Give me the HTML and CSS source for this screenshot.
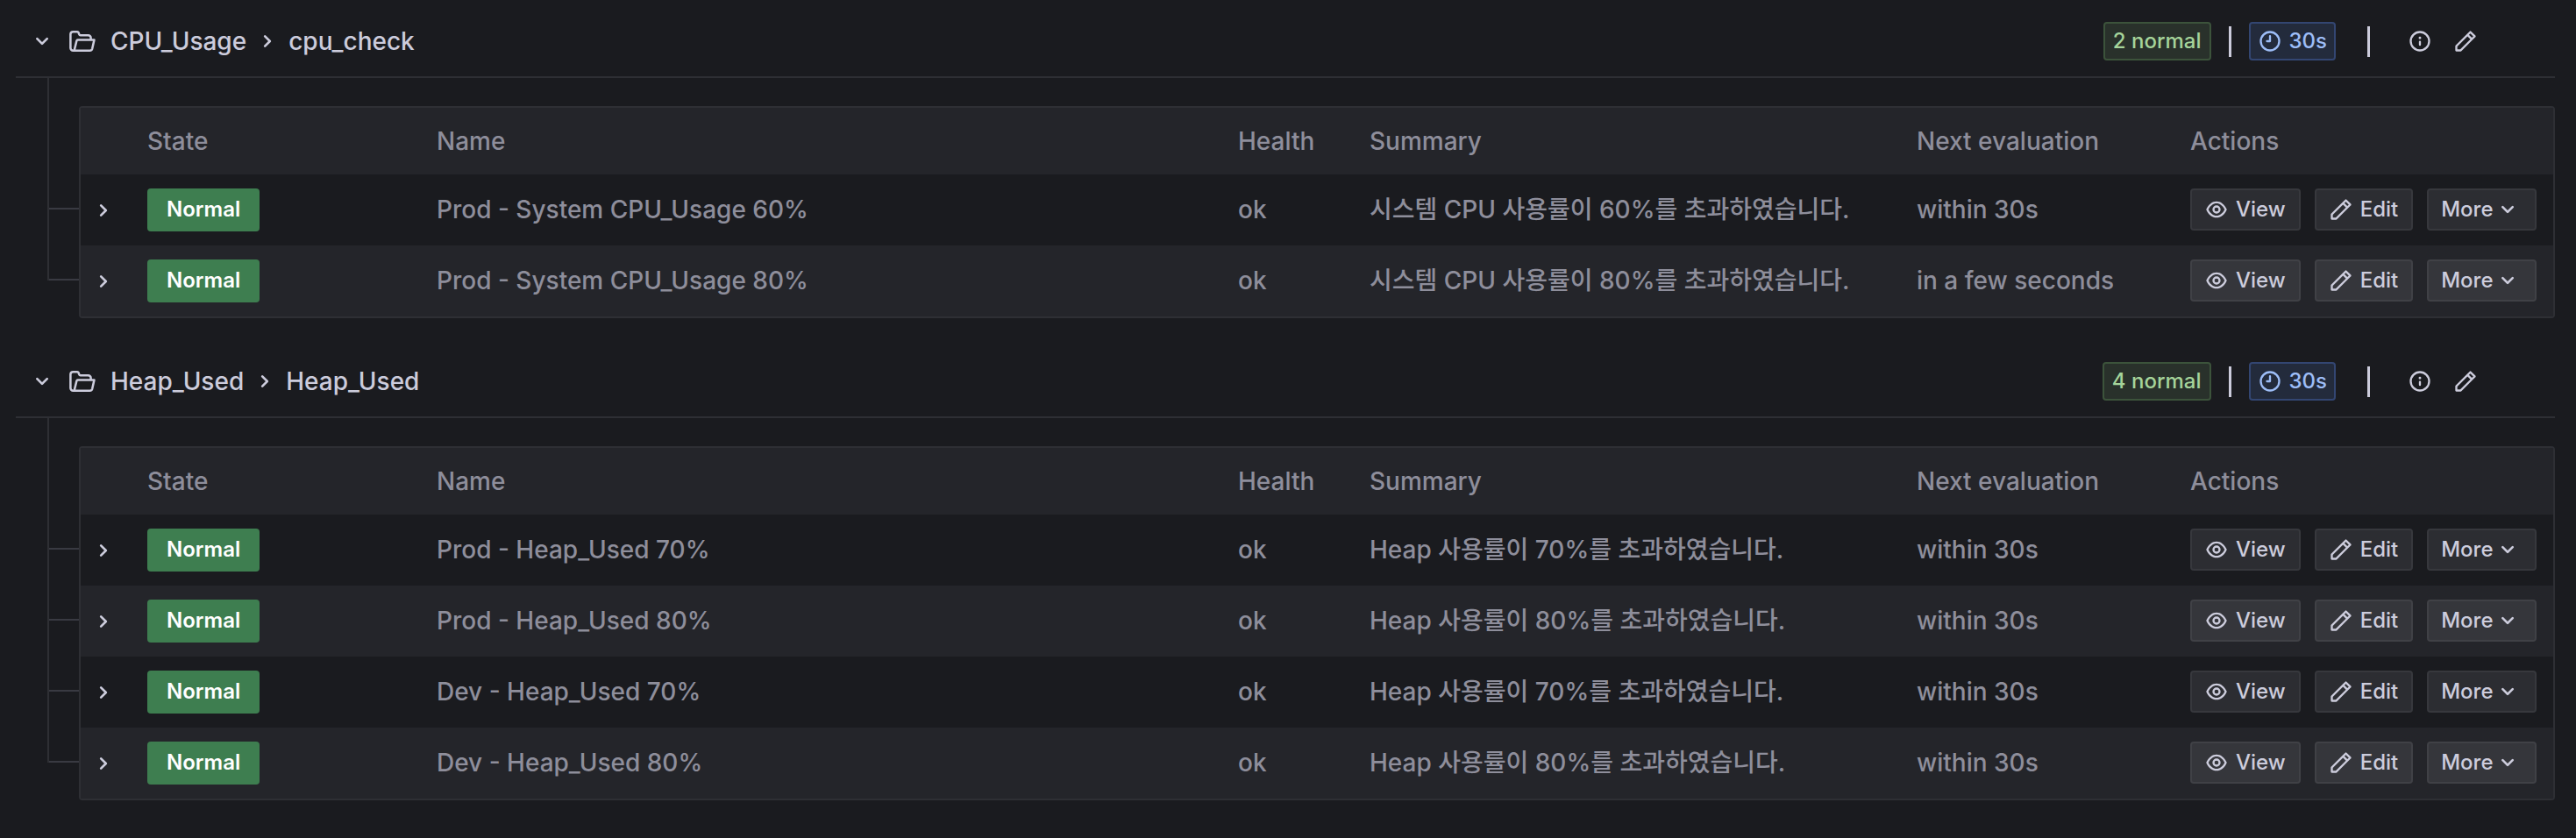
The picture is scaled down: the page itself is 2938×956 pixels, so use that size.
FILE: index.html
```html
<!DOCTYPE html>
<html lang="ko">
<head>
  <meta charset="UTF-8">
  <meta name="viewport" content="width=device-width, initial-scale=1.0">
  <title>Alert rules</title>
  <link rel="stylesheet" href="styles.css">
</head>
<body>

  <svg class="sprite" aria-hidden="true">
    <symbol id="angle-down" viewBox="0 0 24 24"><path d="M17,9.17a1,1,0,0,0-1.41,0L12,12.71,8.46,9.17a1,1,0,0,0-1.41,0,1,1,0,0,0,0,1.42l4.24,4.24a1,1,0,0,0,1.42,0L17,10.59A1,1,0,0,0,17,9.17Z"/></symbol>
    <symbol id="angle-right" viewBox="0 0 24 24"><path d="M14.83,11.29,10.59,7.05a1,1,0,0,0-1.42,0,1,1,0,0,0,0,1.41L12.71,12,9.17,15.54a1,1,0,0,0,0,1.41,1,1,0,0,0,1.42,0l4.24-4.24A1,1,0,0,0,14.83,11.29Z"/></symbol>
    <symbol id="folder" viewBox="0 0 24 24"><path fill="none" stroke="currentColor" stroke-width="1.9" stroke-linejoin="round" d="M5 20H4a2.2 2.2 0 0 1-2.2-2.2V6A2.2 2.2 0 0 1 4 3.9h3.6a1.2 1.2 0 0 1 1.1.8l.5 1.4a1.2 1.2 0 0 0 1.1.8H17a2.2 2.2 0 0 1 2.2 2.2v1.7M5 20l2-8.2a1.2 1.2 0 0 1 1.1-.9h14L20.4 18.4A2.2 2.2 0 0 1 18.3 20H5"/></symbol>
    <symbol id="info" viewBox="0 0 24 24"><path d="M12,2A10,10,0,1,0,22,12,10,10,0,0,0,12,2Zm0,18a8,8,0,1,1,8-8A8,8,0,0,1,12,20Zm0-8.5a1,1,0,0,0-1,1v3a1,1,0,0,0,2,0v-3A1,1,0,0,0,12,11.5Zm0-4a1.25,1.25,0,1,0,1.25,1.25A1.25,1.25,0,0,0,12,7.5Z"/></symbol>
    <symbol id="clock" viewBox="0 0 24 24"><path d="M12,2A10,10,0,1,0,22,12,10,10,0,0,0,12,2Zm0,18a8,8,0,1,1,8-8A8,8,0,0,1,12,20ZM12,6a1,1,0,0,0-1,1v4H9a1,1,0,0,0,0,2h3a1,1,0,0,0,1-1V7A1,1,0,0,0,12,6Z"/></symbol>
    <symbol id="pen" viewBox="0 0 24 24"><path d="M22,7.24a1,1,0,0,0-.29-.71L17.47,2.29A1,1,0,0,0,16.76,2a1,1,0,0,0-.71.29L13.22,5.12h0L2.29,16.05a1,1,0,0,0-.29.71V21a1,1,0,0,0,1,1H7.24A1,1,0,0,0,8,21.71L18.87,10.78h0L21.71,8a1.19,1.19,0,0,0,.22-.33,1,1,0,0,0,0-.24.7.7,0,0,0,0-.14ZM6.83,20H4V17.17l9.93-9.93,2.83,2.83ZM18.17,8.66,15.34,5.83l1.42-1.41,2.82,2.82Z"/></symbol>
    <symbol id="eye" viewBox="0 0 24 24"><path d="M21.92,11.6C19.9,6.91,16.1,4,12,4S4.1,6.91,2.08,11.6a1,1,0,0,0,0,.8C4.1,17.09,7.9,20,12,20s7.9-2.91,9.92-7.6A1,1,0,0,0,21.92,11.6ZM12,18c-3.17,0-6.17-2.29-7.9-6C5.83,8.29,8.83,6,12,6s6.17,2.29,7.9,6C18.17,15.71,15.17,18,12,18ZM12,8a4,4,0,1,0,4,4A4,4,0,0,0,12,8Zm0,6a2,2,0,1,1,2-2A2,2,0,0,1,12,14Z"/></symbol>
  </svg>

  <main class="groups" id="groups"></main>

  <script>
    const groups = [
      {
        folder: 'CPU_Usage',
        name: 'cpu_check',
        rules: [
          { name: 'Prod - System CPU_Usage 60%', summary: '시스템 CPU 사용률이 60%를 초과하였습니다.', next: 'within 30s' },
          { name: 'Prod - System CPU_Usage 80%', summary: '시스템 CPU 사용률이 80%를 초과하였습니다.', next: 'in a few seconds' }
        ]
      },
      {
        folder: 'Heap_Used',
        name: 'Heap_Used',
        rules: [
          { name: 'Prod - Heap_Used 70%', summary: 'Heap 사용률이 70%를 초과하였습니다.', next: 'within 30s' },
          { name: 'Prod - Heap_Used 80%', summary: 'Heap 사용률이 80%를 초과하였습니다.', next: 'within 30s' },
          { name: 'Dev - Heap_Used 70%', summary: 'Heap 사용률이 70%를 초과하였습니다.', next: 'within 30s' },
          { name: 'Dev - Heap_Used 80%', summary: 'Heap 사용률이 80%를 초과하였습니다.', next: 'within 30s' }
        ]
      }
    ];

    function icon(name, size) {
      return `<svg class="icon ${size || ''}" aria-hidden="true"><use href="#${name}"/></svg>`;
    }

    function ruleRow(rule) {
      return `
        <tr>
          <td class="col-expand"><button class="icon-button" aria-label="Expand row">${icon('angle-right', 'icon-lg')}</button></td>
          <td><div class="state">Normal</div></td>
          <td>${rule.name}</td>
          <td>ok</td>
          <td>${rule.summary}</td>
          <td>${rule.next}</td>
          <td>
            <div class="actions">
              <a class="button" href="#view">${icon('eye')}View</a>
              <a class="button" href="#edit">${icon('pen')}Edit</a>
              <button class="button button-more">More${icon('angle-down', 'icon-lg')}</button>
            </div>
          </td>
        </tr>`;
    }

    function groupSection(group) {
      return `
        <section class="group">
          <header class="group-header">
            <button class="icon-button" aria-label="Collapse group">${icon('angle-down', 'icon-lg')}</button>
            <h2 class="group-title">
              ${icon('folder', 'icon-lg')}
              <span class="folder-name">${group.folder}</span>
              ${icon('angle-right', 'icon-lg')}
              <span>${group.name}</span>
            </h2>
            <div class="group-stats">
              <span class="tag tag-green">${group.rules.length} normal</span>
              <span class="divider"></span>
              <span class="tag tag-blue">${icon('clock')}30s</span>
            </div>
            <span class="divider"></span>
            <div class="group-tools">
              <button class="icon-button" aria-label="Group details">${icon('info')}</button>
              <button class="icon-button" aria-label="Edit group">${icon('pen')}</button>
            </div>
          </header>
          <div class="rules">
            <table class="rules-table">
              <colgroup>
                <col class="w-expand"><col class="w-state"><col class="w-name"><col class="w-health">
                <col class="w-summary"><col class="w-next"><col class="w-actions">
              </colgroup>
              <thead>
                <tr><th></th><th>State</th><th>Name</th><th>Health</th><th>Summary</th><th>Next evaluation</th><th>Actions</th></tr>
              </thead>
              <tbody>${group.rules.map(ruleRow).join('')}</tbody>
            </table>
          </div>
        </section>`;
    }

    document.getElementById('groups').innerHTML = groups.map(groupSection).join('');
  </script>

</body>
</html>
```

FILE: styles.css
```css
* { box-sizing: border-box; }
body { margin: 0; background: #1a1b1f; color: #ccccdc; font: 450 28px/44px Inter, "Noto Sans CJK KR", sans-serif; }
button { font: inherit; color: inherit; cursor: pointer; }
a { color: inherit; text-decoration: none; }

.sprite { display: none; }
.icon { width: 28px; height: 28px; flex: none; fill: currentColor; }
.icon-lg { width: 32px; height: 32px; }
.icon-button { display: flex; padding: 0; border: none; background: none; }

.groups { display: flex; flex-direction: column; gap: 32px; padding: 7px 24px 16px 18px; }

/* group header */
.group-header { display: flex; align-items: center; height: 82px; padding: 0 88px 0 14px; border-bottom: 2px solid #2e2f34; }
.group-title { display: flex; align-items: center; flex: 1; gap: 8px; margin: 0 0 0 14px; font-size: 28px; font-weight: 450; }
.folder-name { margin-left: 8px; }
.group-stats { display: flex; align-items: center; gap: 20px; margin-right: 36px; }
.group-tools { display: flex; gap: 24px; margin-left: 43px; }
.divider { width: 3px; height: 35px; background: #ccccdc; }
.tag { display: flex; align-items: center; gap: 8px; height: 44px; padding: 0 8px; border: 2px solid; border-radius: 4px; font-size: 24px; }
.tag-green { padding: 0 9px; background: #29312b; border-color: #3c533b; color: #a5d49a; }
.tag-blue { background: #232b3c; border-color: #334672; color: #9dbdf7; }

/* rules table with tree guide lines on the left */
.rules { position: relative; padding: 32px 0 0 72px; }
.rules::before { content: ""; position: absolute; left: 36px; top: 0; bottom: 43px; border-left: 2px solid #2e2f34; }
.rules-table { width: 100%; table-layout: fixed; border: 2px solid #2e2f34; border-radius: 4px; border-spacing: 0; color: #8e8e9b; }
.rules-table th { height: 76px; padding: 0 16px 0 0; background: #24252a; font-weight: 450; text-align: left; }
.rules-table td { height: 81px; padding: 0 16px 1px 0; white-space: nowrap; }
.rules-table th:last-child, .rules-table td:last-child { padding-right: 0; }
.rules-table tbody tr:nth-child(even) { background: #24252a; }
.w-expand { width: 76px; }
.w-state { width: 330px; }
.w-health { width: 150px; }
.w-summary { width: 624px; }
.w-next { width: 312px; }
.w-actions { width: 414px; }
.rules-table .col-expand { position: relative; padding: 0 0 0 10px; color: #ccccdc; }
.col-expand::before { content: ""; position: absolute; left: -36px; top: 38px; width: 34px; border-top: 2px solid #393a42; }

.state { width: fit-content; height: 49px; padding: 0 22px; border-radius: 4px; background: #3e7e50; color: #fff; font-size: 24px; font-weight: 600; line-height: 47px; }
.actions { display: flex; gap: 16px; }
.button { display: flex; align-items: center; gap: 8px; height: 48px; padding: 0 15px 0 14px; border: 2px solid #37383d; border-radius: 4px; background: #2c2d32; color: #ccccdc; font-size: 24px; font-weight: 550; line-height: 44px; }
.button-more { gap: 0; }
tr:nth-child(even) .button { background: #35363b; border-color: #404146; }
```
